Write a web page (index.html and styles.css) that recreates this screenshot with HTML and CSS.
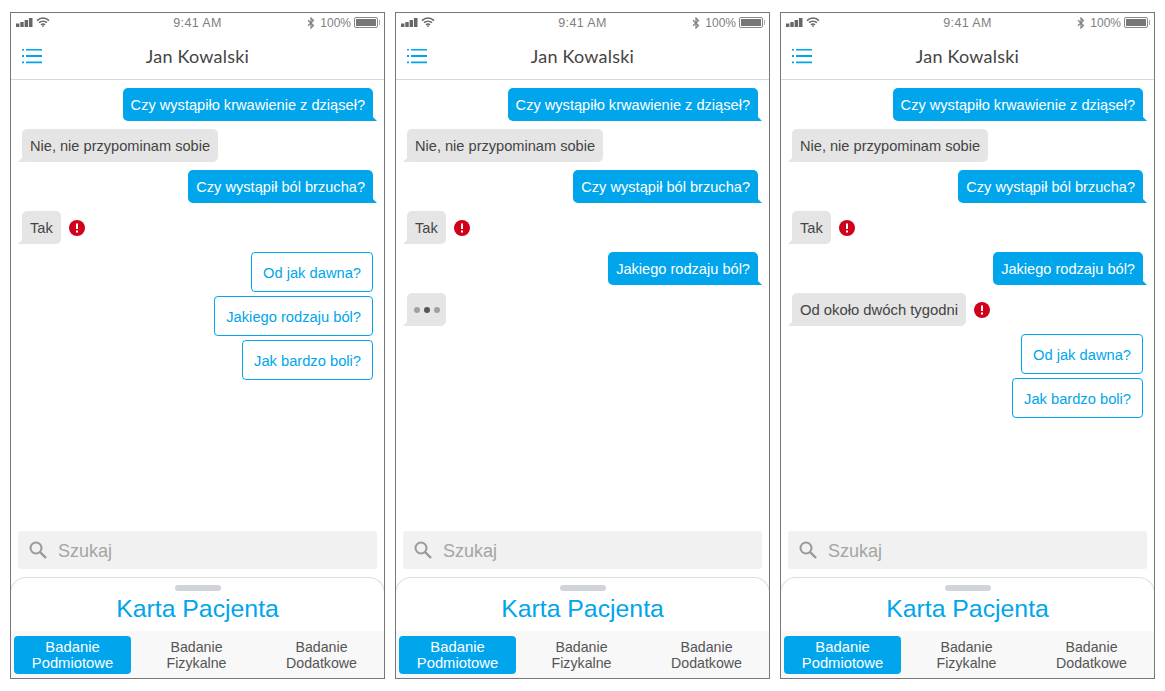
FILE: index.html
```html
<!DOCTYPE html>
<html lang="en">
<head>
    <meta charset="UTF-8">
    <meta name="viewport" content="width=device-width, initial-scale=1.0">
    <title>Karta Pacjenta</title>
    <link rel="stylesheet" href="styles.css">
</head>
<body>
    <svg class="defs" width="0" height="0">
        <symbol id="signal" viewBox="0 0 17 9"><rect x="0" y="5.500" width="3.400" height="3.500"/><rect x="4.300" y="4" width="3.400" height="5"/><rect x="8.600" y="2" width="3.400" height="7"/><rect x="12.900" y="0" width="3.600" height="9"/></symbol>
        <symbol id="wifi" viewBox="0 0 14 10"><path d="M1 3.600C4.500 .2 9.500 .2 13 3.600M3 5.700C5.300 3.700 8.700 3.700 11 5.700M5 7.800C6.200 6.900 7.800 6.900 9 7.800" fill="none" stroke="currentColor" stroke-width="1.600"/><circle cx="7" cy="9.100" r=".9"/></symbol>
        <symbol id="bt" viewBox="0 0 8 12"><path d="M1 3.200L6.500 8.500L4 11V1L6.500 3.500L1 8.800" fill="none" stroke="currentColor" stroke-width="1.200"/></symbol>
        <symbol id="menu" viewBox="0 0 20 15"><path d="M0 .7h2M4 .7h16M0 7h2M4 7h16M0 13.300h2M4 13.300h16" fill="none" stroke="currentColor" stroke-width="1.800"/></symbol>
        <symbol id="search" viewBox="0 0 18 18"><circle cx="7" cy="7" r="5.500" fill="none" stroke="currentColor" stroke-width="2"/><path d="M11 11l6 6" stroke="currentColor" stroke-width="2.400"/></symbol>
        <symbol id="alert" viewBox="0 0 16 16"><circle cx="8" cy="8" r="8" fill="#d0021b"/><rect x="7" y="3.500" width="2" height="5.500" fill="#fff"/><rect x="7" y="10.500" width="2" height="2" fill="#fff"/></symbol>
    </svg>

    <div class="phone">
        <div class="status-bar">
            <div class="status-left"><svg class="icon-signal"><use href="#signal"/></svg><svg class="icon-wifi"><use href="#wifi"/></svg></div>
            <div class="status-time">9:41 AM</div>
            <div class="status-right"><svg class="icon-bt"><use href="#bt"/></svg><span>100%</span><div class="battery"><div class="battery-fill"></div></div></div>
        </div>
        <div class="header">
            <svg class="icon-menu"><use href="#menu"/></svg>
            <h1 class="header-title">Jan Kowalski</h1>
        </div>
        <div class="chat">
            <div class="bubble bubble-out">Czy wystąpiło krwawienie z dziąseł?</div>
            <div class="bubble bubble-in">Nie, nie przypominam sobie</div>
            <div class="bubble bubble-out">Czy wystąpił ból brzucha?</div>
            <div class="row-in"><div class="bubble bubble-in">Tak</div><svg class="icon-alert"><use href="#alert"/></svg></div>
            <div class="choices">
                <div class="choice">Od jak dawna?</div>
                <div class="choice">Jakiego rodzaju ból?</div>
                <div class="choice">Jak bardzo boli?</div>
            </div>
        </div>
        <div class="search"><svg class="icon-search"><use href="#search"/></svg><span class="search-text">Szukaj</span></div>
        <div class="sheet">
            <div class="handle"></div>
            <h2 class="sheet-title">Karta Pacjenta</h2>
            <div class="tabs">
                <div class="tab tab-active">Badanie<br>Podmiotowe</div>
                <div class="tab">Badanie<br>Fizykalne</div>
                <div class="tab">Badanie<br>Dodatkowe</div>
            </div>
        </div>
    </div>

    <div class="phone">
        <div class="status-bar">
            <div class="status-left"><svg class="icon-signal"><use href="#signal"/></svg><svg class="icon-wifi"><use href="#wifi"/></svg></div>
            <div class="status-time">9:41 AM</div>
            <div class="status-right"><svg class="icon-bt"><use href="#bt"/></svg><span>100%</span><div class="battery"><div class="battery-fill"></div></div></div>
        </div>
        <div class="header">
            <svg class="icon-menu"><use href="#menu"/></svg>
            <h1 class="header-title">Jan Kowalski</h1>
        </div>
        <div class="chat">
            <div class="bubble bubble-out">Czy wystąpiło krwawienie z dziąseł?</div>
            <div class="bubble bubble-in">Nie, nie przypominam sobie</div>
            <div class="bubble bubble-out">Czy wystąpił ból brzucha?</div>
            <div class="row-in"><div class="bubble bubble-in">Tak</div><svg class="icon-alert"><use href="#alert"/></svg></div>
            <div class="bubble bubble-out">Jakiego rodzaju ból?</div>
            <div class="bubble bubble-in typing"><span class="dot"></span><span class="dot dot-dark"></span><span class="dot"></span></div>
        </div>
        <div class="search"><svg class="icon-search"><use href="#search"/></svg><span class="search-text">Szukaj</span></div>
        <div class="sheet">
            <div class="handle"></div>
            <h2 class="sheet-title">Karta Pacjenta</h2>
            <div class="tabs">
                <div class="tab tab-active">Badanie<br>Podmiotowe</div>
                <div class="tab">Badanie<br>Fizykalne</div>
                <div class="tab">Badanie<br>Dodatkowe</div>
            </div>
        </div>
    </div>

    <div class="phone">
        <div class="status-bar">
            <div class="status-left"><svg class="icon-signal"><use href="#signal"/></svg><svg class="icon-wifi"><use href="#wifi"/></svg></div>
            <div class="status-time">9:41 AM</div>
            <div class="status-right"><svg class="icon-bt"><use href="#bt"/></svg><span>100%</span><div class="battery"><div class="battery-fill"></div></div></div>
        </div>
        <div class="header">
            <svg class="icon-menu"><use href="#menu"/></svg>
            <h1 class="header-title">Jan Kowalski</h1>
        </div>
        <div class="chat">
            <div class="bubble bubble-out">Czy wystąpiło krwawienie z dziąseł?</div>
            <div class="bubble bubble-in">Nie, nie przypominam sobie</div>
            <div class="bubble bubble-out">Czy wystąpił ból brzucha?</div>
            <div class="row-in"><div class="bubble bubble-in">Tak</div><svg class="icon-alert"><use href="#alert"/></svg></div>
            <div class="bubble bubble-out">Jakiego rodzaju ból?</div>
            <div class="row-in"><div class="bubble bubble-in bubble-long">Od około dwóch tygodni</div><svg class="icon-alert"><use href="#alert"/></svg></div>
            <div class="choices">
                <div class="choice">Od jak dawna?</div>
                <div class="choice">Jak bardzo boli?</div>
            </div>
        </div>
        <div class="search"><svg class="icon-search"><use href="#search"/></svg><span class="search-text">Szukaj</span></div>
        <div class="sheet">
            <div class="handle"></div>
            <h2 class="sheet-title">Karta Pacjenta</h2>
            <div class="tabs">
                <div class="tab tab-active">Badanie<br>Podmiotowe</div>
                <div class="tab">Badanie<br>Fizykalne</div>
                <div class="tab">Badanie<br>Dodatkowe</div>
            </div>
        </div>
    </div>
</body>
</html>
```
FILE: styles.css
```css
* {
    margin: 0;
    padding: 0;
    box-sizing: border-box;
}

body {
    font-family: "Liberation Sans", Arial, sans-serif;
    background-color: white;
    display: flex;
    gap: 10px;
    padding: 12px 10px;
}

.defs {
    position: absolute;
}

.phone {
    position: relative;
    width: 375px;
    height: 667px;
    border: 1px solid #777;
    display: flex;
    flex-direction: column;
    background-color: white;
}

/* frame drawn again on top so the sheet's curved edge tucks under it */
.phone::after {
    content: "";
    position: absolute;
    inset: -1px;
    border: 1px solid #777;
    pointer-events: none;
}

.status-bar {
    height: 19px;
    padding: 0 5px;
    display: grid;
    grid-template-columns: 1fr auto 1fr;
    align-items: center;
    color: #808080;
    font-size: 12px;
}

.status-left,
.status-right {
    display: flex;
    align-items: center;
}

.status-left {
    gap: 3px;
    fill: #666;
    color: #666;
}

.status-time {
    text-align: center;
    font-size: 12.5px;
    letter-spacing: 0.4px;
}

.status-right {
    justify-content: flex-end;
    gap: 3px;
}

.icon-signal {
    width: 17px;
    height: 9px;
}

.icon-wifi {
    width: 14px;
    height: 10px;
    margin-bottom: 2px;
}

.icon-bt {
    width: 8px;
    height: 12px;
    margin-right: 2px;
}

.battery {
    position: relative;
    width: 24px;
    height: 11px;
    margin-right: 1px;
    border: 1px solid #888;
    border-radius: 2px;
    padding: 1px;
}

.battery::after {
    content: "";
    position: absolute;
    right: -3px;
    top: 2px;
    width: 1px;
    height: 5px;
    background-color: #aaa;
}

.battery-fill {
    height: 100%;
    background-color: #777;
}

.header {
    height: 48px;
    border-bottom: 1px solid #d8d8d8;
    display: flex;
    align-items: center;
    justify-content: center;
    position: relative;
    flex-shrink: 0;
}

.icon-menu {
    position: absolute;
    left: 11px;
    top: 17px;
    width: 20px;
    height: 15px;
    color: #00a5ec;
}

.header-title {
    font-family: Lato, sans-serif;
    font-weight: 400;
    font-size: 18px;
    color: #444;
    letter-spacing: 0.22px;
}

.chat {
    flex: 1;
    padding: 8px 11px 0 11px;
    display: flex;
    flex-direction: column;
    align-items: flex-start;
    gap: 8px;
}

.bubble {
    position: relative;
    height: 33px;
    line-height: 35px;
    padding: 0 8px;
    font-size: 14.6px;
    border-radius: 5px;
    white-space: nowrap;
}

.bubble::after {
    content: "";
    position: absolute;
    bottom: 0;
    width: 8px;
    height: 8px;
}

.bubble-out {
    align-self: flex-end;
    background-color: #00a5ec;
    color: white;
}

.bubble-out::after {
    right: -4px;
    background-color: #00a5ec;
    clip-path: polygon(0 0, 50% 50%, 100% 100%, 0 100%);
}

.bubble-in {
    background-color: #e5e5e5;
    color: #444;
}

.bubble-in::after {
    left: -4px;
    background-color: #e5e5e5;
    clip-path: polygon(100% 0, 100% 100%, 0 100%);
}

.bubble-long {
    font-size: 14.8px;
}

.row-in {
    display: flex;
    align-items: center;
    gap: 8px;
}

.icon-alert {
    width: 16px;
    height: 16px;
}

.typing {
    width: 39px;
    display: flex;
    align-items: center;
    justify-content: center;
    gap: 4px;
    padding: 0;
}

.dot {
    width: 6px;
    height: 6px;
    border-radius: 50%;
    background-color: #a0a0a0;
}

.dot-dark {
    background-color: #555;
}

.choices {
    align-self: flex-end;
    display: flex;
    flex-direction: column;
    align-items: flex-end;
    gap: 4px;
}

.choice {
    height: 40px;
    line-height: 40px;
    padding: 0 11px;
    border: 1px solid #00a5ec;
    border-radius: 4px;
    color: #00a5ec;
    font-size: 14.7px;
}

.search {
    margin: 0 7px 8px 7px;
    height: 38px;
    flex-shrink: 0;
    background-color: #f1f1f1;
    border-radius: 3px;
    display: flex;
    align-items: center;
    gap: 11px;
    padding-left: 11px;
    color: #a5a5a5;
    font-size: 18px;
}

.search-text {
    padding-top: 2px;
}

.icon-search {
    width: 18px;
    height: 18px;
    color: #999;
    margin-bottom: 1px;
}

.sheet {
    height: 102px;
    flex-shrink: 0;
    margin: 0 -1px -1px -1px;
    border: 1px solid #ddd;
    border-bottom: none;
    border-radius: 16px 16px 0 0;
    display: flex;
    flex-direction: column;
    align-items: center;
    background-color: white;
}

.handle {
    width: 46px;
    height: 6px;
    margin-top: 7px;
    border-radius: 3px;
    background-color: #d0d3d8;
}

.sheet-title {
    font-size: 24.8px;
    font-weight: 400;
    color: #00a5ec;
    line-height: 28px;
    margin-top: 4px;
}

.tabs {
    margin-top: 8px;
    width: 100%;
    flex: 1;
    background-color: #f8f8f8;
    display: grid;
    grid-template-columns: 120px 125px 125px;
    padding: 5px 0 5px 3px;
}

.tab {
    font-size: 14.2px;
    line-height: 16px;
    text-align: center;
    color: #555;
    padding-top: 3px;
}

.tab-active {
    margin-right: 3px;
    font-size: 14.8px;
    background-color: #00a5ec;
    border-radius: 4px;
    color: white;
}
```
